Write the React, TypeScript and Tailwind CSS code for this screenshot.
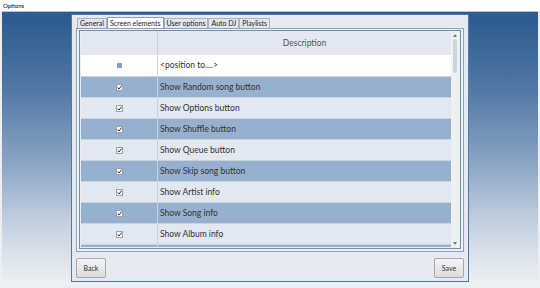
const rows = [
  "Show Random song button",
  "Show Options button",
  "Show Shuffle button",
  "Show Queue button",
  "Show Skip song button",
  "Show Artist info",
  "Show Song info",
  "Show Album info",
]

const tabs = ["General", "Screen elements", "User options", "Auto DJ", "Playlists"]

function Check() {
  return (
    <svg width="7" height="7" viewBox="0 0 7 7" className="block">
      <rect x="0.5" y="0.5" width="6" height="6" fill="#f4f6f9" stroke="#9aa3b0" />
      <path d="M1.6 3.6 L3 5 L5.6 1.6" fill="none" stroke="#333" strokeWidth="1" />
    </svg>
  )
}

export default function App() {
  return (
    <div
      className="flex h-[288px] w-[540px] flex-col overflow-hidden bg-[#eceef2] text-[#333]"
      style={{ fontFamily: 'Lato, "Open Sans", sans-serif' }}
    >
      <div className="flex h-[11px] shrink-0 items-center bg-white pl-[3px] text-[6px] text-black">Options</div>
      <div className="mx-[2px] mb-[3px] flex flex-1 justify-center border-t border-[#b7c3d3] bg-[linear-gradient(180deg,#2c5a8f_0%,#4a73a1_25%,#8aa4c4_55%,#c6d2e1_78%,#eef1f5_100%)] pt-[2px]">
        <div className="flex h-[268px] w-[398px] flex-col border border-[#4f79a8] bg-[#e6eaf0] px-[4px] pt-[2px]">
          <div className="flex h-[11px] shrink-0 items-end pl-[1px] text-[7px] text-[#222]">
            {tabs.map((t, i) =>
              i === 1 ? (
                <div key={t} className="-mb-px flex h-[12px] items-center border border-b-0 border-[#8d9bad] bg-white px-[2px]">
                  {t}
                </div>
              ) : (
                <div key={t} className="flex h-[10px] items-center border border-b-0 border-[#a8b3c1] bg-[#e2e6ec] px-[2px]">
                  {t}
                </div>
              )
            )}
          </div>
          <div className="flex h-[224px] shrink-0 border border-[#8fa3bb] bg-[#eef1f5] p-[2px] pt-px">
            <div className="flex flex-1 border border-[#6f8fb5] bg-[#e9edf2] p-[1px] pt-0">
              <div className="flex flex-1 flex-col overflow-hidden">
                <div className="flex h-[24px] shrink-0 bg-[#e3e8f0]">
                  <div className="w-[77px] border-r border-[#c9d1dc]" />
                  <div className="flex flex-1 items-center justify-center text-[8.5px] text-[#555]">Description</div>
                </div>
                <div className="flex h-[21px] shrink-0 bg-white">
                  <div className="flex w-[77px] items-center justify-center border-r border-[#d3d9e2]">
                    <div className="h-[5px] w-[5px] bg-[#8a9ec0]" />
                  </div>
                  <div className="flex flex-1 items-center pl-[2px] text-[8.5px]">&lt;position to....&gt;</div>
                </div>
                {rows.concat([""]).map((r, i) => (
                  <div
                    key={i}
                    className={`flex h-[21px] shrink-0 border-t border-[#c8d3e1] ${i % 2 === 0 ? "bg-[#97b0cd]" : "bg-[#e3e8f0]"}`}
                  >
                    <div className="flex w-[77px] items-center justify-center border-r border-[#c8d3e1]">
                      {r && <Check />}
                    </div>
                    <div className="flex flex-1 items-center pl-[2px] text-[8.5px] text-[#333]">{r}</div>
                  </div>
                ))}
              </div>
              <div className="flex w-[8px] flex-col items-center bg-[#eef0f3] pt-[3px]">
                <svg width="4" height="3" viewBox="0 0 4 3">
                  <path d="M0 3 L2 0 L4 3 Z" fill="#777" />
                </svg>
                <div className="mt-[2px] h-[34px] w-[4px] rounded-[2px] bg-[#cfd3d8]" />
                <div className="flex-1" />
                <svg width="4" height="3" viewBox="0 0 4 3" className="mb-[2px]">
                  <path d="M0 0 L2 3 L4 0 Z" fill="#777" />
                </svg>
              </div>
            </div>
          </div>
          <div className="mt-[6px] flex justify-between">
            <button className="h-[20px] w-[30px] rounded-[2px] border border-[#a5a9ae] bg-[linear-gradient(180deg,#f4f4f4,#dcdcdc)] text-[7px] text-[#333]">
              Back
            </button>
            <button className="h-[20px] w-[30px] rounded-[2px] border border-[#a5a9ae] bg-[linear-gradient(180deg,#f4f4f4,#dcdcdc)] text-[7px] text-[#333]">
              Save
            </button>
          </div>
        </div>
      </div>
    </div>
  )
}
